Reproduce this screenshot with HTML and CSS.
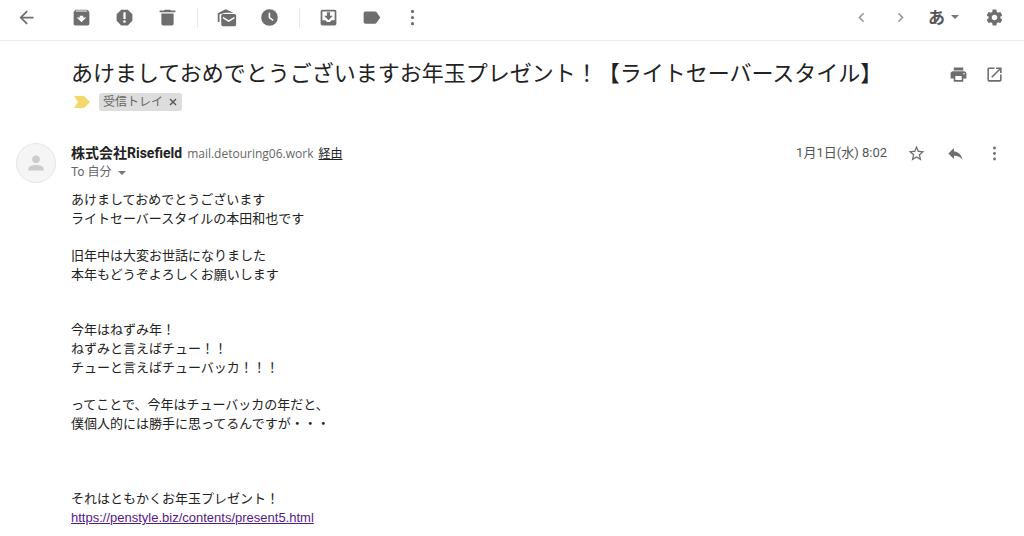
FILE: index.html
```html
<!DOCTYPE html>
<html lang="ja">
<head>
  <meta charset="utf-8">
  <title>受信トレイ</title>
  <link rel="stylesheet" href="styles.css">
</head>
<body>

<!-- toolbar -->
<header class="toolbar">
  <button class="tool back" aria-label="戻る"><svg viewBox="0 0 24 24"><path d="M20 11H7.83l5.59-5.59L12 4l-8 8 8 8 1.41-1.41L7.83 13H20v-2z"/></svg></button>
  <button class="tool" aria-label="アーカイブ"><svg viewBox="0 0 24 24"><path d="M20.54 5.23l-1.39-1.68C18.88 3.21 18.47 3 18 3H6c-.47 0-.88.21-1.16.55L3.46 5.23C3.17 5.57 3 6.02 3 6.5V19c0 1.1.9 2 2 2h14c1.1 0 2-.9 2-2V6.5c0-.48-.17-.93-.46-1.27zM12 17.5L6.5 12H10v-2h4v2h3.500L12 17.500zM5.120 5l.81-1h12l.94 1H5.120z"/></svg></button>
  <button class="tool" aria-label="迷惑メール"><svg viewBox="0 0 24 24"><path d="M15.730 3H8.270L3 8.270v7.460L8.270 21h7.460L21 15.730V8.270L15.730 3zM12 18c-.8 0-1.500-.7-1.500-1.500s.7-1.500 1.500-1.500 1.500.7 1.500 1.500-.7 1.500-1.500 1.500zM13.300 13.800h-2.600V6h2.600v7.800z"/></svg></button>
  <button class="tool" aria-label="削除"><svg viewBox="0 0 24 24"><path d="M5 19c0 1.100.9 2 2 2h10c1.100 0 2-.9 2-2V7.500H5V19zM21 4h-5l-1-1H9L8 4H3v2h18V4z"/></svg></button>
  <span class="divider"></span>
  <button class="tool" aria-label="未読にする"><svg viewBox="0 0 24 24"><path d="M20 8H8c-1.100 0-2 .9-2 2v10c0 1.100.9 2 2 2h13c1.100 0 2-.9 2-2V10c0-1.100-.9-2-2-2zM21 13l-6.500 4L8 13v-2l6.500 4L21 11v2z"/><path d="M2 17V7l9-4.500L20 6.500H11L4 8.300V17z"/></svg></button>
  <button class="tool" aria-label="スヌーズ"><svg viewBox="0 0 24 24"><path fill-rule="evenodd" d="M12 2.500a9.500 9.500 0 1 0 0 19 9.500 9.500 0 0 0 0-19zM11 6.500h1.800v5.200l3.900 2.900-1 1.400L11 12.600z"/></svg></button>
  <span class="divider"></span>
  <button class="tool" aria-label="移動"><svg viewBox="0 0 24 24"><path fill-rule="evenodd" d="M5 3h14a2 2 0 0 1 2 2v14a2 2 0 0 1-2 2H5a2 2 0 0 1-2-2V5a2 2 0 0 1 2-2zM5 5v10h3.500l1.800 2h3.400l1.800-2H19V5zM10.200 6h3.600v4H17l-5 5-5-5h3.200z"/></svg></button>
  <button class="tool" aria-label="ラベル"><svg viewBox="0 0 24 24"><path d="M17.630 5.840C17.270 5.330 16.670 5 16 5H5c-1.100 0-2 .9-2 2v10c0 1.100.9 2 2 2h11c.67 0 1.270-.33 1.630-.84L22 12l-4.370-6.160z"/></svg></button>
  <button class="tool narrow" aria-label="その他"><svg viewBox="0 0 24 24"><circle cx="12" cy="5" r="1.800"/><circle cx="12" cy="12" r="1.800"/><circle cx="12" cy="19" r="1.800"/></svg></button>

  <div class="right">
    <button class="tool pale" aria-label="前へ"><svg viewBox="0 0 24 24"><path d="M15.400 7.400L14 6l-6 6 6 6 1.400-1.400L10.800 12z"/></svg></button>
    <button class="tool pale" aria-label="次へ"><svg viewBox="0 0 24 24"><path d="M10 6L8.600 7.400l4.600 4.600-4.600 4.600L10 18l6-6z"/></svg></button>
    <button class="lang">あ<span class="caret"></span></button>
    <button class="tool" aria-label="設定"><svg viewBox="0 0 24 24"><path d="M19.430 12.980c.04-.32.07-.64.07-.98s-.03-.66-.07-.98l2.110-1.650c.19-.15.24-.42.12-.64l-2-3.460c-.12-.22-.39-.3-.61-.22l-2.490 1c-.52-.4-1.080-.73-1.690-.98l-.38-2.650C14.460 2.180 14.250 2 14 2h-4c-.25 0-.46.18-.49.42l-.38 2.650c-.61.25-1.170.59-1.690.98l-2.490-1c-.23-.09-.49 0-.61.22l-2 3.460c-.13.22-.07.49.12.64l2.110 1.650c-.04.32-.07.65-.07.98s.03.66.07.98l-2.110 1.650c-.19.15-.24.42-.12.64l2 3.460c.12.22.39.3.61.22l2.490-1c.52.4 1.080.73 1.690.98l.38 2.650c.03.24.24.42.49.42h4c.25 0 .46-.18.49-.42l.38-2.650c.61-.25 1.170-.59 1.690-.98l2.490 1c.23.09.49 0 .61-.22l2-3.460c.12-.22.07-.49-.12-.64l-2.110-1.650zM12 15.500c-1.930 0-3.500-1.570-3.500-3.500s1.570-3.500 3.500-3.500 3.500 1.570 3.500 3.500-1.570 3.500-3.500 3.500z"/></svg></button>
  </div>
</header>

<main>
  <!-- subject -->
  <div class="subject">
    <h1>あけましておめでとうございますお年玉プレゼント！【ライトセーバースタイル】</h1>
    <div class="right actions">
      <button class="tool" aria-label="印刷"><svg viewBox="0 0 24 24"><path d="M19 8H5c-1.660 0-3 1.340-3 3v6h4v4h12v-4h4v-6c0-1.660-1.340-3-3-3zm-3 11H8v-5h8v5zm3-7c-.55 0-1-.45-1-1s.45-1 1-1 1 .45 1 1-.45 1-1 1zm-1-9H6v4h12V3z"/></svg></button>
      <button class="tool" aria-label="新しいウィンドウ"><svg viewBox="0 0 24 24"><path d="M19 19H5V5h7V3H5c-1.110 0-2 .9-2 2v14c0 1.100.89 2 2 2h14c1.100 0 2-.9 2-2v-7h-2v7zM14 3v2h3.590l-9.830 9.830 1.410 1.410L19 6.410V10h2V3h-7z"/></svg></button>
    </div>
  </div>
  <div class="labels">
    <svg class="marker" viewBox="0 0 16 12"><path d="M0 0h10l6 6-6 6H0l4-6z"/></svg>
    <span class="chip">受信トレイ <button class="remove" aria-label="ラベルを削除"><svg viewBox="0 0 8 8"><path d="M1 1l6 6M7 1L1 7"/></svg></button></span>
  </div>

  <!-- message -->
  <article class="message">
    <div class="avatar"><svg viewBox="0 0 40 40"><circle cx="20" cy="16" r="4"/><path d="M12 28v-2c0-3 5-4 8-4s8 1 8 4v2z"/></svg></div>
    <div class="content">
      <div class="sender">
        <div class="from"><b>株式会社Risefield</b> <span class="domain">mail.detouring06.work</span> <a class="via" href="#">経由</a></div>
        <div class="right">
          <span class="date">1月1日(水) 8:02</span>
          <button class="tool" aria-label="スター"><svg viewBox="0 0 24 24"><path d="M22 9.240l-7.190-.62L12 2 9.190 8.630 2 9.240l5.460 4.730L5.820 21 12 17.270 18.180 21l-1.630-7.030L22 9.240zM12 15.400l-3.760 2.270 1-4.280-3.320-2.880 4.380-.38L12 6.100l1.710 4.040 4.380.38-3.320 2.880 1 4.280L12 15.400z"/></svg></button>
          <button class="tool" aria-label="返信"><svg viewBox="0 0 24 24"><path d="M10 9V5l-7 7 7 7v-4.100c5 0 8.500 1.600 11 5.100-1-5-4-10-11-11z"/></svg></button>
          <button class="tool" aria-label="その他"><svg viewBox="0 0 24 24"><circle cx="12" cy="5" r="1.800"/><circle cx="12" cy="12" r="1.800"/><circle cx="12" cy="19" r="1.800"/></svg></button>
        </div>
      </div>
      <button class="to">To 自分<span class="caret"></span></button>

      <div class="text">
        <p>あけましておめでとうございます<br>
        ライトセーバースタイルの本田和也です</p>
        <p>旧年中は大変お世話になりました<br>
        本年もどうぞよろしくお願いします</p>
        <p class="gap2">今年はねずみ年！<br>
        ねずみと言えばチュー！！<br>
        チューと言えばチューバッカ！！！</p>
        <p>ってことで、今年はチューバッカの年だと、<br>
        僕個人的には勝手に思ってるんですが・・・</p>
        <p class="gap3">それはともかくお年玉プレゼント！<br>
        <a href="#">https://penstyle.biz/contents/present5.html</a></p>
      </div>
    </div>
  </article>
</main>

</body>
</html>
```
FILE: styles.css
```css
body {
  margin: 0;
  background: #fff;
  color: #222;
  font-family: Roboto, "Noto Sans CJK JP", sans-serif;
  font-size: 13px;
}

button {
  margin: 0;
  padding: 0;
  border: 0;
  background: none;
  color: inherit;
  font: inherit;
  cursor: pointer;
}

.toolbar {
  display: flex;
  align-items: center;
  height: 35px;
  padding: 0 10px 5px 5px;
  border-bottom: 1px solid #ebebeb;
}

.tool {
  display: flex;
  flex: none;
  align-items: center;
  justify-content: center;
  width: 43px;
  height: 24px;
}
.tool svg {
  width: 21px;
  height: 21px;
  fill: #6e6e6e;
}
.back {
  margin-right: 12px;
}
.narrow {
  width: 39px;
}
.tool.pale svg {
  fill: #999;
}

.divider {
  width: 1px;
  height: 20px;
  margin: 0 7px 0 8px;
  background: #e8e8e8;
}

.right {
  display: flex;
  flex: none;
  align-items: center;
  margin-left: auto;
}
.right .tool {
  width: 39px;
}
.right .tool svg {
  width: 19px;
  height: 19px;
}
.right.actions .tool {
  width: 36px;
}

.caret {
  display: inline-block;
  border: 4px solid transparent;
  border-top-color: #777;
  border-bottom: 0;
  vertical-align: middle;
}

.lang {
  width: 55px;
  padding-right: 8px;
  color: #555;
  font-size: 17px;
  font-weight: bold;
  line-height: 24px;
  white-space: nowrap;
}
.lang .caret {
  margin: 0 0 4px 6px;
}

main {
  padding: 18px 10px 0 0;
}

.subject {
  display: flex;
  align-items: center;
  padding: 0 2px 0 71px;
}
h1 {
  margin: 0;
  font-size: 22px;
  font-weight: normal;
  line-height: 30px;
}

.labels {
  display: flex;
  align-items: center;
  gap: 9px;
  margin-top: 4px;
  padding-left: 74px;
}
.marker {
  width: 16px;
  height: 12px;
  fill: #f3d768;
}
.chip {
  display: flex;
  align-items: center;
  gap: 6px;
  height: 18px;
  padding: 0 5px 0 4px;
  border-radius: 3px;
  background: #ddd;
  color: #666;
  font-size: 12px;
  line-height: 16px;
}
.remove {
  display: flex;
}
.remove svg {
  width: 8px;
  height: 8px;
  stroke: #555;
  stroke-width: 1.4;
}

.message {
  display: flex;
  margin-top: 32px;
  padding-left: 16px;
}
.avatar {
  flex: none;
  box-sizing: border-box;
  width: 40px;
  height: 40px;
  border: 1px solid #e6e6e6;
  border-radius: 50%;
  background: #f5f5f5;
}
.avatar svg {
  display: block;
  fill: #ccc;
}
.content {
  flex: 1;
  margin-left: 15px;
}

.sender {
  display: flex;
  align-items: center;
  height: 20px;
}
.from {
  display: flex;
  align-items: baseline;
  gap: 5px;
  line-height: 18px;
}
.from b {
  font-size: 14px;
}
.domain {
  color: #666;
  font-family: "Open Sans", sans-serif;
  font-size: 12px;
}
.via {
  color: #222;
  font-size: 12px;
}
.date {
  margin-right: 10px;
  color: #555;
  line-height: 18px;
}

.to {
  display: block;
  height: 18px;
  color: #666;
  font-size: 12px;
  line-height: 18px;
}
.to .caret {
  margin-left: 7px;
}

.text {
  margin-top: 9px;
  font-family: "Liberation Sans", "Noto Sans CJK JP", sans-serif;
  line-height: 19px;
}
.text p {
  margin: 0 0 18px;
}
.text .gap2 {
  margin-top: 36px;
}
.text .gap3 {
  margin-top: 56px;
  margin-bottom: 0;
}
.text a {
  color: #551a8b;
}
```
